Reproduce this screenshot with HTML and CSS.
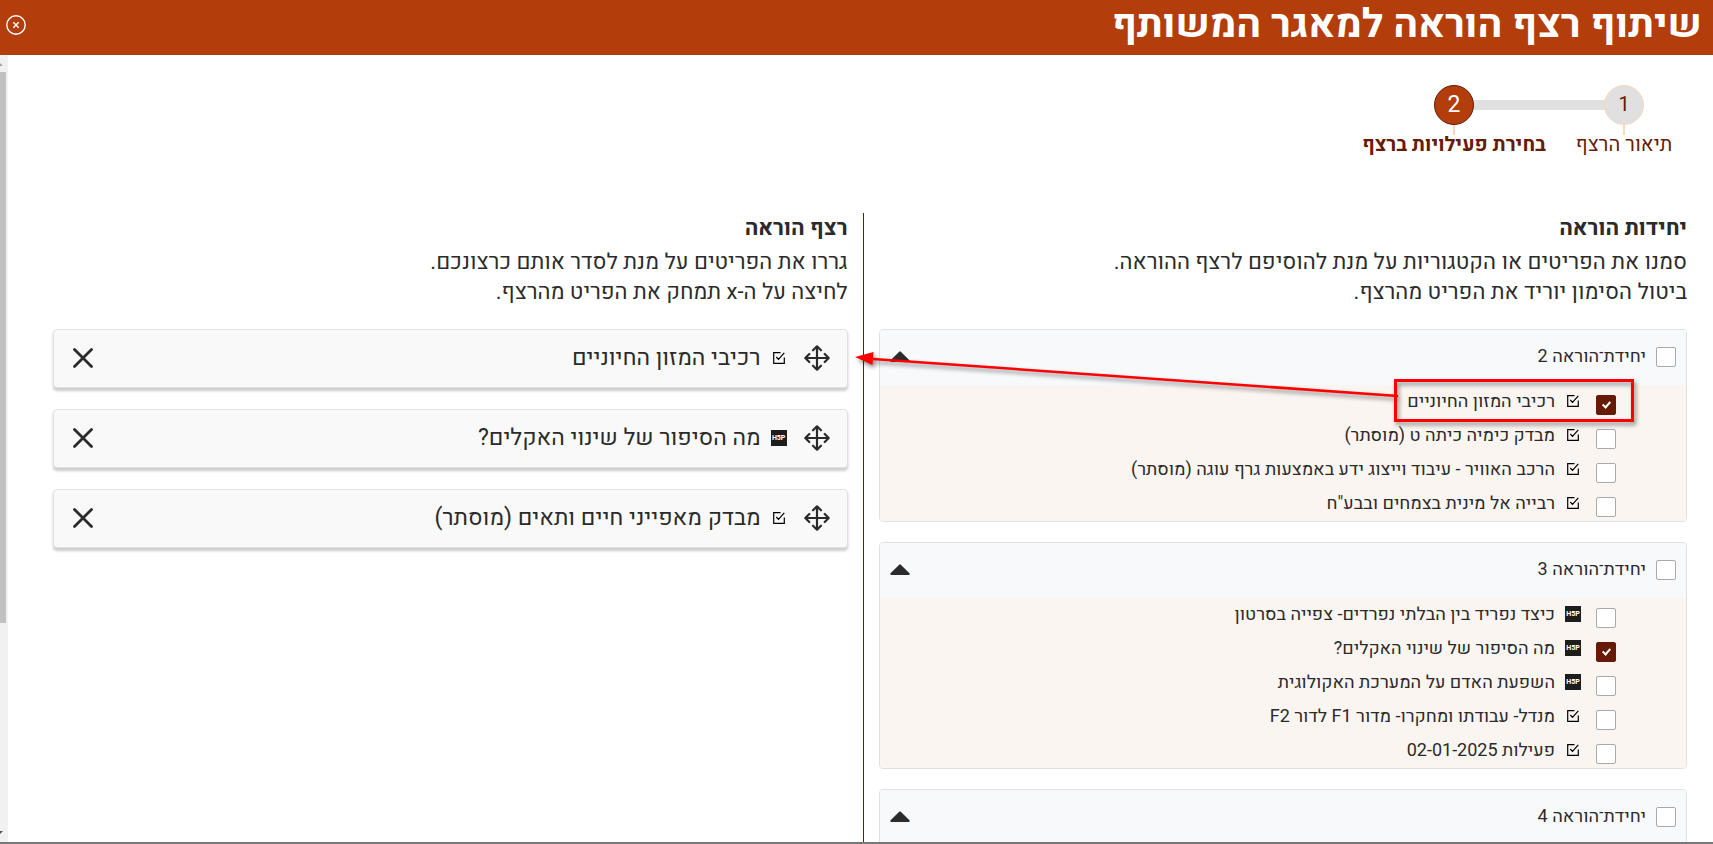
FILE: index.html
```html
<!DOCTYPE html>
<html lang="he" dir="rtl">
<head>
  <meta charset="UTF-8" />
  <meta name="viewport" content="width=device-width, initial-scale=1.0" />
  <title>שיתוף רצף הוראה למאגר המשותף</title>
  <link rel="stylesheet" href="styles.css">
</head>
<body>
  <!-- shared icons -->
  <svg class="sprite" aria-hidden="true">
    <symbol id="icon-task" viewBox="0 0 12 12">
      <path d="M7.5.7H.7v10.600h10.600V5.500M3.300 5l2.200 2.400L11.300.8" fill="none" stroke="currentColor" stroke-width="1.200" />
    </symbol>
    <symbol id="icon-move" viewBox="0 0 26 26">
      <path d="M13 1.5v23M1.5 13h23M9 5.3l4-4 4 4M9 20.7l4 4 4-4M5.3 9l-4 4 4 4M20.7 9l4 4-4 4" fill="none" stroke="currentColor" stroke-width="2.2" stroke-linecap="round" stroke-linejoin="round" />
    </symbol>
    <symbol id="icon-remove" viewBox="0 0 20 20">
      <path d="M1.5 1.5l17 17M18.5 1.5l-17 17" fill="none" stroke="currentColor" stroke-width="2.8" stroke-linecap="round" />
    </symbol>
    <symbol id="icon-up" viewBox="0 0 20 11">
      <path d="M9.2.7Q10 0 10.8.7L19.7 9.6Q20 11 18.8 11H1.2Q0 11 .3 9.6Z" fill="currentColor" />
    </symbol>
  </svg>

  <div class="dialog">
    <header class="dialog-header">
      <h1>שיתוף רצף הוראה למאגר המשותף</h1>
      <button type="button" class="close-btn" aria-label="סגירה">
        <svg width="20" height="20" viewBox="0 0 20 20"><circle cx="10" cy="10" r="9.2" /><path d="M7.3 7.3l5.4 5.4M12.7 7.3l-5.4 5.4" /></svg>
      </button>
    </header>

    <div class="dialog-body">
      <main class="content">
        <ol class="steps">
          <li class="step">
            <span class="step-number">1</span>
            <span class="step-label">תיאור הרצף</span>
          </li>
          <li class="step active">
            <span class="step-number">2</span>
            <span class="step-label">בחירת פעילויות ברצף</span>
          </li>
        </ol>

        <div class="columns">
          <section class="units">
            <h2>יחידות הוראה</h2>
            <p>סמנו את הפריטים או הקטגוריות על מנת להוסיפם לרצף ההוראה.<br>ביטול הסימון יוריד את הפריט מהרצף.</p>

            <div class="unit">
              <div class="unit-header">
                <input type="checkbox" id="unit2">
                <label for="unit2">יחידת־הוראה 2</label>
                <button type="button" class="toggle-btn" aria-label="כיווץ"><svg class="up"><use href="#icon-up" /></svg></button>
              </div>
              <ul class="unit-items">
                <li>
                  <input type="checkbox" id="item1" checked>
                  <label for="item1"><svg class="icon"><use href="#icon-task" /></svg>רכיבי המזון החיוניים</label>
                </li>
                <li>
                  <input type="checkbox" id="item2">
                  <label for="item2"><svg class="icon"><use href="#icon-task" /></svg>מבדק כימיה כיתה ט (מוסתר)</label>
                </li>
                <li>
                  <input type="checkbox" id="item3">
                  <label for="item3"><svg class="icon"><use href="#icon-task" /></svg>הרכב האוויר - עיבוד וייצוג ידע באמצעות גרף עוגה (מוסתר)</label>
                </li>
                <li>
                  <input type="checkbox" id="item4">
                  <label for="item4"><svg class="icon"><use href="#icon-task" /></svg>רבייה אל מינית בצמחים ובבע"ח</label>
                </li>
              </ul>
            </div>

            <div class="unit">
              <div class="unit-header">
                <input type="checkbox" id="unit3">
                <label for="unit3">יחידת־הוראה 3</label>
                <button type="button" class="toggle-btn" aria-label="כיווץ"><svg class="up"><use href="#icon-up" /></svg></button>
              </div>
              <ul class="unit-items">
                <li>
                  <input type="checkbox" id="item5">
                  <label for="item5"><span class="h5p">H5P</span>כיצד נפריד בין הבלתי נפרדים- צפייה בסרטון</label>
                </li>
                <li>
                  <input type="checkbox" id="item6" checked>
                  <label for="item6"><span class="h5p">H5P</span>מה הסיפור של שינוי האקלים?</label>
                </li>
                <li>
                  <input type="checkbox" id="item7">
                  <label for="item7"><span class="h5p">H5P</span>השפעת האדם על המערכת האקולוגית</label>
                </li>
                <li>
                  <input type="checkbox" id="item8">
                  <label for="item8"><svg class="icon"><use href="#icon-task" /></svg>מנדל- עבודתו ומחקרו- מדור F1 לדור F2</label>
                </li>
                <li>
                  <input type="checkbox" id="item9">
                  <label for="item9"><svg class="icon"><use href="#icon-task" /></svg><span>פעילות <bdi dir="ltr">02-01-2025</bdi></span></label>
                </li>
              </ul>
            </div>

            <div class="unit">
              <div class="unit-header">
                <input type="checkbox" id="unit4">
                <label for="unit4">יחידת־הוראה 4</label>
                <button type="button" class="toggle-btn" aria-label="כיווץ"><svg class="up"><use href="#icon-up" /></svg></button>
              </div>
            </div>
          </section>

          <section class="sequence">
            <h2>רצף הוראה</h2>
            <p>גררו את הפריטים על מנת לסדר אותם כרצונכם.<br>לחיצה על ה-x תמחק את הפריט מהרצף.</p>

            <ul class="sequence-list">
              <li class="sequence-item">
                <svg class="move"><use href="#icon-move" /></svg>
                <span class="name"><svg class="icon"><use href="#icon-task" /></svg>רכיבי המזון החיוניים</span>
                <button type="button" class="remove-btn" aria-label="הסרה"><svg><use href="#icon-remove" /></svg></button>
              </li>
              <li class="sequence-item">
                <svg class="move"><use href="#icon-move" /></svg>
                <span class="name"><span class="h5p">H5P</span>מה הסיפור של שינוי האקלים?</span>
                <button type="button" class="remove-btn" aria-label="הסרה"><svg><use href="#icon-remove" /></svg></button>
              </li>
              <li class="sequence-item">
                <svg class="move"><use href="#icon-move" /></svg>
                <span class="name"><svg class="icon"><use href="#icon-task" /></svg>מבדק מאפייני חיים ותאים (מוסתר)</span>
                <button type="button" class="remove-btn" aria-label="הסרה"><svg><use href="#icon-remove" /></svg></button>
              </li>
            </ul>
          </section>
        </div>
      </main>

      <div class="scrollbar" aria-hidden="true">
        <svg width="8" height="17" viewBox="0 0 8 17"><path d="M-3 11L0 8l3 3z" fill="#a3a3a3" /></svg>
        <div class="thumb"></div>
        <svg width="8" height="17" viewBox="0 0 8 17"><path d="M-3 6h6L0 9z" fill="#505050" /></svg>
      </div>
    </div>

    <!-- arrow from the ticked item to its place in the sequence -->
    <svg class="callout" width="780" height="80" viewBox="0 0 780 80" aria-hidden="true">
      <path d="M543 51L18 14" stroke="#f00" stroke-width="2.6" />
      <path d="M0 12L18.5 7 17.5 20z" fill="#f00" />
      <rect x="540.5" y="35.5" width="237" height="40" fill="none" stroke="#f00" stroke-width="3" />
    </svg>
  </div>
</body>
</html>
```
FILE: styles.css
```css
* {
  margin: 0;
  padding: 0;
  box-sizing: border-box;
}

body {
  height: 100vh;
  overflow: hidden;
  background: #777;
  color: #2b2b2b;
  font-family: Heebo, Roboto, "Open Sans", "Liberation Sans", sans-serif;
  font-size: 18px;
}

ul,
ol {
  list-style: none;
}

button {
  border: none;
  background: none;
  color: inherit;
  cursor: pointer;
}

svg {
  display: block;
  flex: none;
}

.sprite {
  position: absolute;
  width: 0;
  height: 0;
}

/* dialog */
.dialog {
  position: relative;
  display: flex;
  flex-direction: column;
  height: calc(100vh - 2px);
  background: #fff;
}

.dialog-header {
  display: flex;
  justify-content: space-between;
  align-items: center;
  padding: 0 11px 5px 6px;
  background: #b33d0b;
  color: #fff;
}

.dialog-header h1 {
  font-size: 40px;
  line-height: 50px;
}

.close-btn svg {
  fill: none;
  stroke: #fff;
  stroke-width: 1.4;
}

.dialog-body {
  display: flex;
  flex: 1;
  min-height: 0;
}

.content {
  flex: 1;
  overflow: hidden;
  padding: 30px 26px 0 45px;
}

.scrollbar {
  display: flex;
  flex-direction: column;
  width: 8px;
  background: #f1f1f1;
}

.scrollbar .thumb {
  width: 6px;
  height: 70%;
  margin-bottom: auto;
  align-self: flex-end;
  background: #c1c1c1;
}

/* steps */
.steps {
  display: flex;
  height: 128px;
}

.step {
  position: relative;
  display: flex;
  flex-direction: column;
  align-items: center;
  width: 126px;
  color: #651b05;
  font-size: 20px;
  line-height: 20px;
  white-space: nowrap;
}

.step.active {
  width: 214px;
  font-weight: bold;
}

.step-number {
  position: relative;
  z-index: 1;
  width: 40px;
  height: 40px;
  border: 1px solid #fad7bd;
  border-radius: 50%;
  background: #e0e0e0;
  font-size: 20px;
  line-height: 38px;
  text-align: center;
}

.step.active .step-number {
  border-color: #651b05;
  background: #b33d0b;
  color: #fff;
  font-size: 23px;
  font-weight: normal;
}

/* small stem under the circle */
.step-number::after {
  content: "";
  position: absolute;
  top: 39px;
  left: 18px;
  width: 2px;
  height: 10px;
  background: #fad7bd;
}

/* bar between the circles */
.step:first-child::after {
  content: "";
  position: absolute;
  top: 15px;
  right: 50%;
  width: 170px;
  height: 10px;
  background: #e0e0e0;
}

.step-label {
  margin-top: 10px;
}

/* columns */
.columns {
  display: flex;
}

.units {
  flex: 824 0 0;
  padding-left: 15px;
  border-left: 1px solid #651b05;
}

.sequence {
  flex: 810 0 0;
  padding-right: 15px;
}

h2 {
  font-size: 22px;
  line-height: 30px;
}

.columns p {
  margin: 4px 0 22px;
  font-size: 22px;
  line-height: 30px;
}

input[type="checkbox"] {
  flex: none;
  appearance: none;
  width: 20px;
  height: 20px;
  border: 1px solid #a9a9a9;
  border-radius: 2px;
  background: #fff;
}

input[type="checkbox"]:checked {
  border-color: #651b05;
  background: #651b05;
}

input[type="checkbox"]:checked::after {
  content: "";
  display: block;
  width: 3px;
  height: 6px;
  margin: 4px 6px;
  border: solid #fff;
  border-width: 0 2px 2px 0;
  transform: rotate(42deg);
}

.unit {
  margin-bottom: 20px;
  border: 1px solid #dee2e6;
  border-radius: 4px;
  overflow: hidden;
}

.unit-header {
  display: flex;
  align-items: center;
  gap: 10px;
  height: 55px;
  padding: 0 10px 2px;
  background: #f8f9fb;
}

.toggle-btn {
  margin-right: auto;
}

.up {
  width: 20px;
  height: 11px;
}

.unit-items {
  padding-right: 70px;
  background: #faf5f1;
}

.unit-items li {
  display: flex;
  align-items: flex-end;
  gap: 15px;
  height: 34px;
  padding-bottom: 4px;
}

.unit-items label {
  display: flex;
  align-items: center;
  gap: 10px;
  height: 28px;
}

.icon {
  width: 16px;
  height: 16px;
  padding: 2px;
  color: #000;
}

.h5p {
  width: 16px;
  height: 16px;
  background: #1d1d1d;
  color: #fff;
  font-size: 7px;
  font-weight: bold;
  line-height: 16px;
  text-align: center;
}

/* selected sequence */
.sequence-item {
  display: flex;
  align-items: center;
  height: 59px;
  margin-bottom: 21px;
  padding: 0 17px 2px 19px;
  border: 1px solid #dee2e6;
  border-radius: 4px;
  background: #f9f9f9;
  box-shadow: 0 3px 3px rgba(0, 0, 0, 0.2);
  font-size: 23px;
}

.move {
  width: 26px;
  height: 26px;
}

.sequence-item .name {
  display: flex;
  align-items: center;
  gap: 10px;
  margin-right: 17px;
}

.remove-btn {
  margin-right: auto;
}

.remove-btn svg {
  width: 20px;
  height: 20px;
}

.callout {
  position: absolute;
  top: 345px;
  right: 78px;
  filter: drop-shadow(2px 3px 2px rgba(0, 0, 0, 0.45));
  pointer-events: none;
}
```
